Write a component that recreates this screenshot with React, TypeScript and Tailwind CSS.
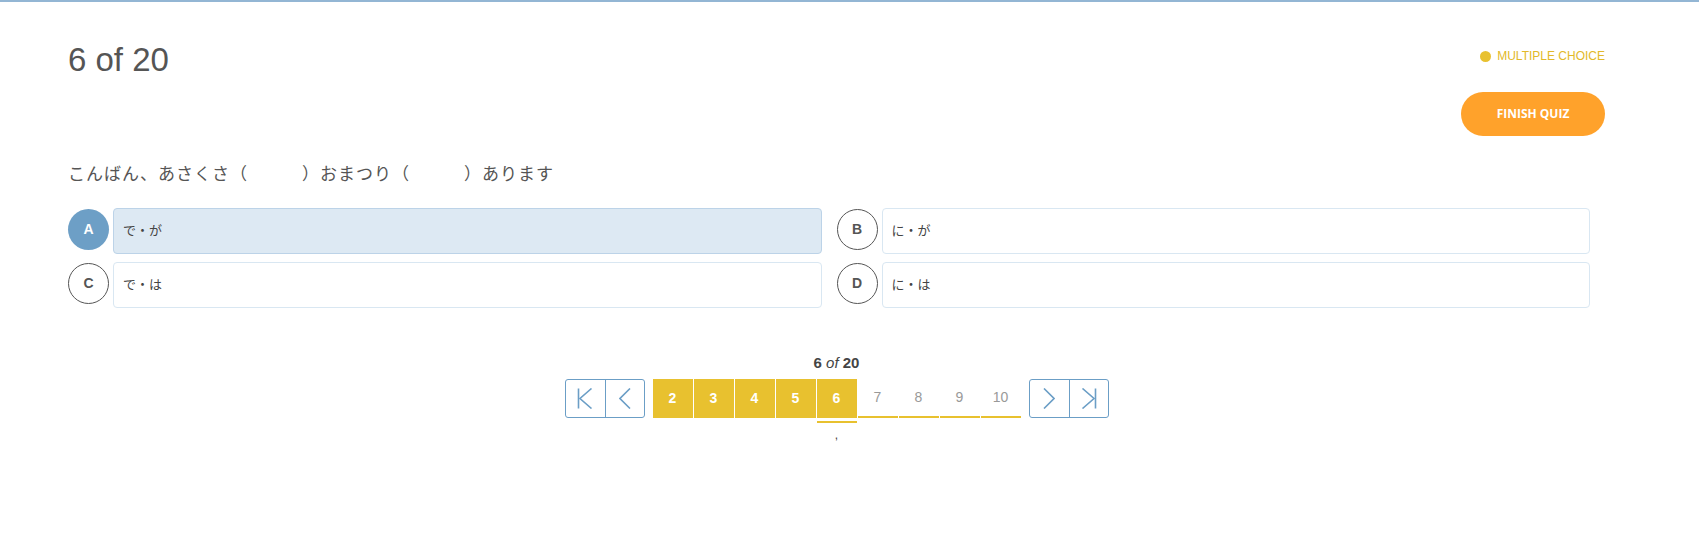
import React from "react";

const latin = "font-['Liberation_Sans','Roboto',sans-serif]";
const jp = "font-['Roboto','Noto_Sans_CJK_JP',sans-serif]";

type Option = { key: string; text: string; selected?: boolean };

const options: Option[] = [
  { key: "A", text: "で・が", selected: true },
  { key: "B", text: "に・が" },
  { key: "C", text: "で・は" },
  { key: "D", text: "に・は" },
];

const FirstIcon = () => (
  <svg width="16" height="21" viewBox="0 0 16 21" fill="none" stroke="#6b9ec6" strokeWidth="1.6">
    <line x1="1.5" y1="0.5" x2="1.5" y2="20.5" />
    <polyline points="14.5,0.5 3,10.5 14.5,20.5" />
  </svg>
);

const PrevIcon = () => (
  <svg width="12" height="21" viewBox="0 0 12 21" fill="none" stroke="#6b9ec6" strokeWidth="1.6">
    <polyline points="11,0.5 1,10.5 11,20.5" />
  </svg>
);

const NextIcon = () => (
  <svg width="12" height="21" viewBox="0 0 12 21" fill="none" stroke="#6b9ec6" strokeWidth="1.6">
    <polyline points="1,0.5 11,10.5 1,20.5" />
  </svg>
);

const LastIcon = () => (
  <svg width="16" height="21" viewBox="0 0 16 21" fill="none" stroke="#6b9ec6" strokeWidth="1.6">
    <polyline points="1.5,0.5 13,10.5 1.5,20.5" />
    <line x1="14.5" y1="0.5" x2="14.5" y2="20.5" />
  </svg>
);

const OptionRow = ({ opt }: { opt: Option }) => (
  <div className="flex items-start gap-[4px]">
    <div
      className={
        opt.selected
          ? `${latin} mt-px w-[41px] h-[41px] shrink-0 rounded-full bg-[#6d9fc6] text-white flex items-center justify-center text-[14px] font-bold`
          : `${latin} mt-px w-[41px] h-[41px] shrink-0 rounded-full border border-[#555] bg-white text-[#555] flex items-center justify-center text-[14px] font-bold`
      }
    >
      {opt.key}
    </div>
    <div
      className={
        opt.selected
          ? "flex-1 h-[46px] rounded-[4px] border border-[#bcd3e8] bg-[#dde9f3] flex items-center pl-[9px] text-[13px] text-[#444]"
          : "flex-1 h-[46px] rounded-[4px] border border-[#d9e7f2] bg-white flex items-center pl-[9px] text-[13px] text-[#444]"
      }
    >
      {opt.text}
    </div>
  </div>
);

export default function App() {
  const done = [2, 3, 4, 5];
  const upcoming = [7, 8, 9, 10];

  return (
    <div className={`min-h-[538px] bg-white border-t-2 border-[#93b6d4] ${jp}`}>
      <div className="ml-[68px] w-[1537px] pt-[38px]">
        {/* header */}
        <div className="flex justify-between items-start">
          <h1 className={`${latin} text-[33px] leading-[40px] text-[#555]`}>6 of 20</h1>
          <div className="flex flex-col items-end pt-[8px]">
            <div className="flex items-center gap-[6px] h-[16px]">
              <span className="w-[11px] h-[11px] rounded-full bg-[#e8c130]"></span>
              <span className={`${latin} text-[12px] leading-[16px] text-[#e2b92a]`}>MULTIPLE CHOICE</span>
            </div>
            <button className="mt-[28px] w-[144px] h-[44px] rounded-full bg-[#ffa22b] text-white text-[12px] font-bold font-['Open_Sans',sans-serif]">
              FINISH QUIZ
            </button>
          </div>
        </div>

        {/* question */}
        <p className="mt-[26px] text-[17px] leading-[24px] tracking-[1px] text-[#555]">
          こんばん、あさくさ（　　　）おまつり（　　　）あります
        </p>

        {/* options */}
        <div className="mt-[22px] grid grid-cols-2 gap-y-[8px]">
          {options.map((o) => (
            <div key={o.key} className="pr-[15px]">
              <OptionRow opt={o} />
            </div>
          ))}
        </div>

        {/* pagination */}
        <div className="mt-[45px] flex flex-col items-center">
          <div className={`${latin} text-[15px] leading-[20px] font-bold text-[#444]`}>
            6 <span className="italic font-normal">of</span> 20
          </div>
          <div className={`${latin} mt-[6px] flex items-start gap-[8px]`}>
            <div className="flex h-[39px] rounded-[3px] border border-[#6b9ec6]">
              <button className="w-[39px] flex items-center justify-center"><FirstIcon /></button>
              <button className="w-[39px] flex items-center justify-center border-l border-[#6b9ec6]"><PrevIcon /></button>
            </div>
            <div className="flex items-start gap-px">
              {done.map((n) => (
                <div key={n} className="w-[40px] h-[39px] bg-[#e8c12f] text-white text-[14px] font-bold flex items-center justify-center">
                  {n}
                </div>
              ))}
              <div className="w-[40px] flex flex-col items-center">
                <div className="w-[40px] h-[39px] bg-[#e8c12f] text-white text-[14px] font-bold flex items-center justify-center">6</div>
                <div className="mt-[3px] w-[40px] h-[2px] bg-[#e8c12f]"></div>
                <div className="mt-[5px] text-[12px] leading-[14px] text-[#444]">,</div>
              </div>
              {upcoming.map((n) => (
                <div key={n} className="w-[40px] h-[39px] border-b-2 border-[#e8c12f] text-[#999] text-[14px] flex items-center justify-center">
                  {n}
                </div>
              ))}
            </div>
            <div className="flex h-[39px] rounded-[3px] border border-[#6b9ec6]">
              <button className="w-[39px] flex items-center justify-center"><NextIcon /></button>
              <button className="w-[39px] flex items-center justify-center border-l border-[#6b9ec6]"><LastIcon /></button>
            </div>
          </div>
        </div>
      </div>
    </div>
  );
}
